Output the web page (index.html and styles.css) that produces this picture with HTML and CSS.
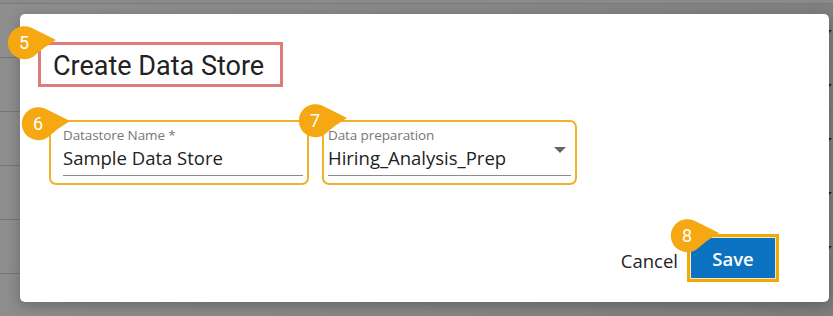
FILE: index.html
```html
<!DOCTYPE html>
<html>
<head>
<meta charset="utf-8">
<link rel="stylesheet" href="styles.css">
</head>
<body>
<div class="page">
  <div class="topbar"></div>
  <div class="row"><span class="caret"></span></div>
  <div class="row"><span class="caret"></span></div>
  <div class="row"><span class="caret"></span></div>
  <div class="row"><span class="caret"></span></div>
  <div class="row"><span class="caret"></span></div>
  <div class="bottom-icons">
    <span class="info-dot"></span>
    <svg class="filter-icon" width="18" height="14" viewBox="0 0 18 14"><path d="M1 2h10M1 6h8M1 10h7M1 13h9" stroke="#333" stroke-width="1.6" fill="none"/><path d="M11 6h7l-3 4v4h-1v-4z" fill="#333"/></svg>
  </div>
</div>

<div class="dialog">
  <div class="title-box"><h1 class="title">Create Data Store</h1></div>

  <div class="fields">
    <div class="field field-name">
      <label class="field-label">Datastore Name *</label>
      <div class="field-value">Sample Data Store</div>
    </div>
    <div class="field field-prep">
      <label class="field-label">Data preparation</label>
      <div class="field-value">Hiring_Analysis_Prep<span class="dropdown-arrow"></span></div>
    </div>
  </div>

  <div class="actions">
    <button class="btn-cancel">Cancel</button>
    <button class="btn-save">Save</button>
  </div>

  <div class="badge badge-5"><svg width="50" height="34" viewBox="0 0 50 34"><path class="badge-shape" d="M49 14 Q37 8 23.9 1.6 A16.5 16.5 0 1 0 26.5 30.4 Q37 21 49 14 Z"/></svg><span class="badge-num">5</span></div>
  <div class="badge badge-6"><svg width="50" height="34" viewBox="0 0 50 34"><path class="badge-shape" d="M49 14 Q37 8 23.9 1.6 A16.5 16.5 0 1 0 26.5 30.4 Q37 21 49 14 Z"/></svg><span class="badge-num">6</span></div>
  <div class="badge badge-7"><svg width="50" height="34" viewBox="0 0 50 34"><path class="badge-shape" d="M49 14 Q37 8 23.9 1.6 A16.5 16.5 0 1 0 26.5 30.4 Q37 21 49 14 Z"/></svg><span class="badge-num">7</span></div>
  <div class="badge badge-8"><svg width="50" height="34" viewBox="0 0 50 34"><path class="badge-shape" d="M49 14 Q37 8 23.9 1.6 A16.5 16.5 0 1 0 26.5 30.4 Q37 21 49 14 Z"/></svg><span class="badge-num">8</span></div>
</div>
</body>
</html>
```

FILE: styles.css
```css
* { box-sizing: border-box; }

html, body {
  margin: 0;
  padding: 0;
  width: 833px;
  height: 316px;
  overflow: hidden;
}

body {
  background: #858585;
  font-family: "Open Sans", "Liberation Sans", sans-serif;
  position: relative;
}

.page {
  display: flex;
  flex-direction: column;
  width: 833px;
  height: 316px;
  background: linear-gradient(100deg, #8e8e8e 0%, #868686 60%, #7e7e7e 100%);
}

.topbar {
  height: 4px;
  border-bottom: 1px solid #7a7a7a;
  background: #8a8a8a;
}

.row {
  height: 54px;
  border-bottom: 1px solid #767676;
  display: flex;
  justify-content: flex-end;
  align-items: flex-start;
  padding-top: 26px;
}

.caret {
  width: 0;
  height: 0;
  border-left: 3px solid transparent;
  border-right: 3px solid transparent;
  border-top: 3px solid #222;
  margin-right: 1px;
}

.bottom-icons {
  display: flex;
  justify-content: flex-end;
  gap: 24px;
  padding-right: 11px;
  margin-top: 4px;
}

.info-dot {
  width: 20px;
  height: 20px;
  border-radius: 50%;
  background: #1e1e1e;
  margin-top: -6px;
}

.filter-icon { display: block; margin-top: -1px; }

.dialog {
  position: absolute;
  left: 20px;
  top: 14px;
  width: 809px;
  height: 288px;
  background: #fff;
  border-radius: 5px;
  box-shadow: 0 4px 14px rgba(0,0,0,0.25);
  display: flex;
  flex-direction: column;
  padding: 28px 50px 20px 18px;
}

.title-box {
  width: 245px;
  height: 45px;
  border: 3px solid #e07b7c;
  padding: 0 0 0 12px;
  display: flex;
  align-items: center;
}

.title {
  margin: 0;
  font-family: Roboto, "Liberation Sans", sans-serif;
  font-weight: 400;
  font-size: 27px;
  color: #222;
  letter-spacing: 0;
  line-height: 1;
  padding-top: 3px;
}

.fields {
  display: flex;
  gap: 13px;
  margin-top: 33px;
  margin-left: 11px;
}

.field {
  height: 65px;
  border: 2px solid #f0b22b;
  border-radius: 7px;
  padding: 5px 4px 0 12px;
  display: flex;
  flex-direction: column;
}

.field-name { width: 260px; }
.field-prep { width: 255px; padding-left: 4px; padding-right: 4px; }

.field-label {
  font-size: 13.5px;
  color: #777;
  line-height: 16px;
  letter-spacing: -0.1px;
}

.field-value {
  font-size: 18.5px;
  color: #222;
  line-height: 24px;
  padding: 3px 0 5px;
  border-bottom: 1px solid #8c8c8c;
  display: flex;
  justify-content: space-between;
  align-items: center;
}

.dropdown-arrow {
  width: 0;
  height: 0;
  border-left: 6px solid transparent;
  border-right: 6px solid transparent;
  border-top: 6px solid #666;
  margin-right: 5px;
  margin-top: -16px;
}

.actions {
  margin-top: auto;
  display: flex;
  justify-content: flex-end;
  align-items: center;
  gap: 9px;
}

.btn-cancel {
  border: none;
  background: none;
  padding: 0;
  font-family: "Open Sans", "Liberation Sans", sans-serif;
  font-size: 18.5px;
  color: #222;
  margin-top: 4px;
}

.btn-save {
  width: 92px;
  height: 48px;
  background: #0b72c1;
  border: 3px solid #f2a900;
  box-shadow: inset 0 0 0 1px #e6e6e6;
  color: #fff;
  font-family: "Open Sans", "Liberation Sans", sans-serif;
  font-size: 18.5px;
  font-weight: 600;
  padding: 0;
}

.badge {
  position: absolute;
  width: 50px;
  height: 34px;
}

.badge svg { display: block; }

.badge-shape { fill: #f5a812; }

.badge-num {
  position: absolute;
  left: 0;
  top: 0;
  width: 34px;
  height: 34px;
  line-height: 34px;
  text-align: center;
  color: #fff;
  font-family: Roboto, "Liberation Sans", sans-serif;
  font-size: 18px;
}

.badge-5 { left: -13px; top: 12px; }
.badge-6 { left: 1px; top: 93px; }
.badge-7 { left: 278px; top: 90px; }
.badge-8 { left: 650px; top: 205px; }
```
